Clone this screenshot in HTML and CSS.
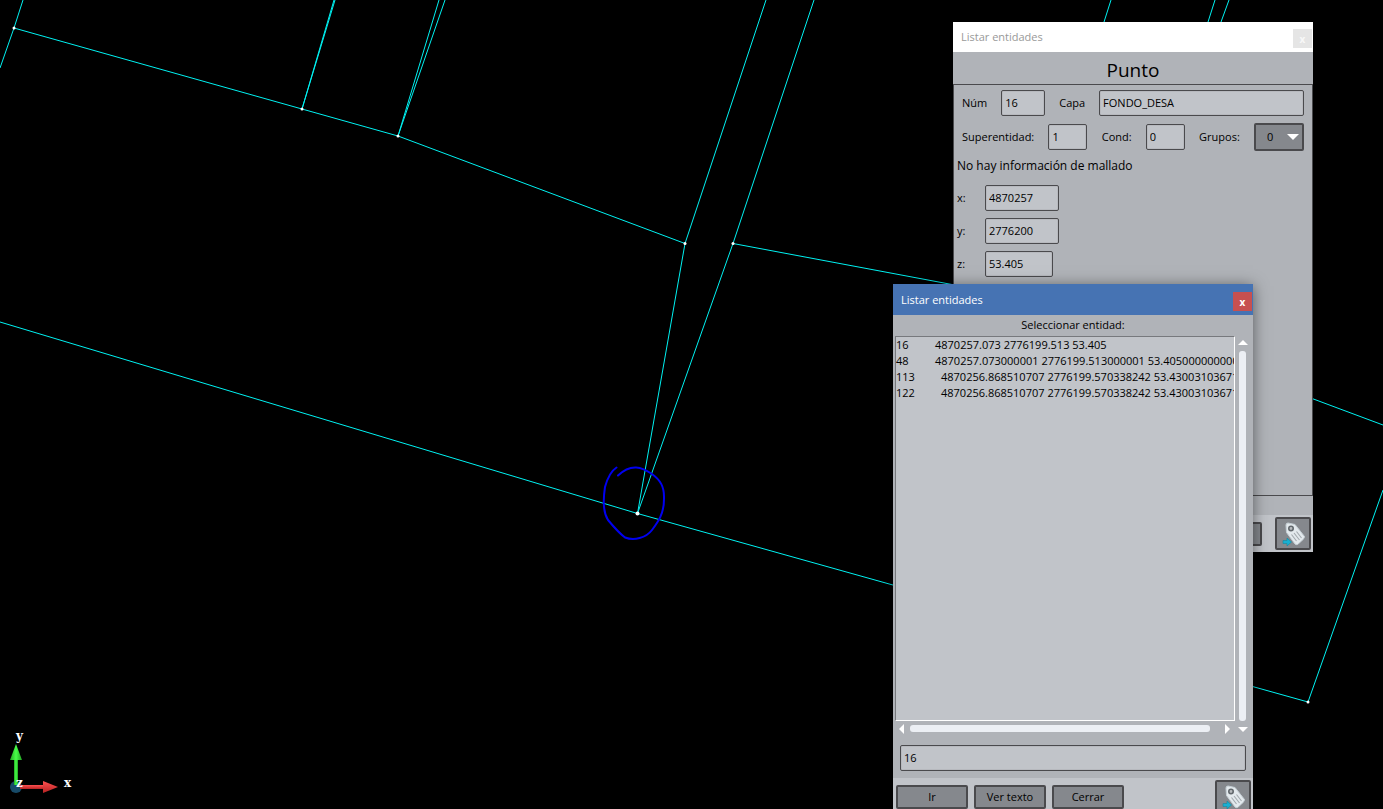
FILE: index.html
```html
<!DOCTYPE html>
<html lang="es">
<head>
<meta charset="utf-8">
<title>Listar entidades</title>
<link rel="stylesheet" href="styles.css">
</head>
<body>
<main class="desktop">
  <svg class="canvas" width="1383" height="809" viewBox="0 0 1383 809" aria-hidden="true">
    <defs>
      <linearGradient id="red" x1="0" y1="0" x2="0" y2="1"><stop offset="0" stop-color="#ff5050"/><stop offset="1" stop-color="#b52222"/></linearGradient>
      <linearGradient id="green" x1="0" y1="0" x2="1" y2="0"><stop offset="0" stop-color="#23a523"/><stop offset=".5" stop-color="#48ff48"/><stop offset="1" stop-color="#20a020"/></linearGradient>
      <symbol id="tag" viewBox="0 0 28 28">
        <path d="M9 3L16 4.500L25.500 16.500Q26 18.500 18.500 24.500Q17 25 16 24L7.500 12.500L7 5Q7 3 9 3Z" fill="#e3e9ed" stroke="#c4ced4" stroke-width="1"/>
        <circle cx="12" cy="8.500" r="2.200" fill="#b6babd" stroke="#62686d" stroke-width="1.600"/>
        <path d="M12.500 14.500L17.500 21M15 13L20.500 20M17.500 11.500L22.500 18" stroke="#a2a9ae" stroke-width="1.100"/>
        <path d="M4 20.500H8V18L12.500 22L8 26V23.500H4Z" fill="#19b0d2" stroke="#1688a0" stroke-width=".6"/>
      </symbol>
    </defs>
    <g class="wires">
      <path d="M23 0L14 28L0 68M14 28L302 109L398 136L685 243.500L637.500 513.500"/>
      <path d="M335 0L302 109M334 0L302 109"/>
      <path d="M439 0L398 136L445 0M766 0L685 243.500M814 0L733 243.500L637.500 513.500M733 243.500L960 286"/>
      <path d="M0 322L637.500 513.500L900 587M1240 683L1308 702L1383 490M1300 394L1383 425"/>
      <path d="M1111 0L1104 22M1215 0L1208 22M1229 0L1221 22"/>
    </g>
    <g class="nodes">
      <circle cx="14" cy="28" r="1.500"/><circle cx="302" cy="109" r="1.500"/><circle cx="398" cy="136" r="1.500"/>
      <circle cx="685" cy="243.500" r="1.500"/><circle cx="733" cy="243.500" r="1.500"/>
      <circle cx="637.500" cy="513.500" r="2"/><circle cx="1308" cy="702" r="1.500"/>
    </g>
    <path class="mark" d="M616.500 467.500C611 471 607.500 478 605 487C603 500 603.500 513 608 520C613 526 619 533 625 537.500C634 541 646 538 652 530C658 522 664 514 664 499C664.500 486 660 480 652 474C642 467 631 463 618 475.500"/>
    <circle cx="16" cy="787" r="6" fill="#174a68"/>
    <rect x="14" y="757" width="4" height="28" fill="url(#green)"/>
    <path d="M16 744L22 760H10Z" fill="url(#green)"/>
    <rect x="20" y="785" width="25" height="4" fill="url(#red)"/>
    <path d="M58 787L43 793V781Z" fill="url(#red)"/>
    <g class="axes"><text x="16" y="740">y</text><text x="16" y="787">z</text><text x="64" y="787">x</text></g>
  </svg>

  <section class="window window-back">
    <header class="title"><span>Listar entidades</span><button class="close" aria-label="Cerrar ventana">x</button></header>
    <h1 class="heading">Punto</h1>
    <div class="frame">
      <div class="row">
        <label for="num">Núm</label><input class="w-num" id="num" value="16">
        <label for="capa">Capa</label><input class="grow" id="capa" value="FONDO_DESA">
      </div>
      <div class="row row-even">
        <label for="sup">Superentidad:</label><input class="w-one" id="sup" value="1">
        <label for="cond">Cond:</label><input class="w-one" id="cond" value="0">
        <label for="grupos">Grupos:</label>
        <span class="combo"><select id="grupos"><option>0</option></select><i class="tri down"></i></span>
      </div>
      <p class="note">No hay información de mallado</p>
      <div class="coords">
        <label for="x">x:</label><input id="x" value="4870257">
        <label for="y">y:</label><input id="y" value="2776200">
        <label for="z">z:</label><input class="short" id="z" value="53.405">
      </div>
    </div>
    <footer class="actions actions-back"><button class="button" aria-label="Cerrar"></button><button class="button icon" aria-label="Etiqueta"><svg width="28" height="28"><use href="#tag"/></svg></button></footer>
  </section>

  <section class="window window-front">
    <header class="title"><span>Listar entidades</span><button class="close" aria-label="Cerrar ventana">x</button></header>
    <div class="caption">Seleccionar entidad:</div>
    <div class="listing">
      <ul class="list">
        <li><span class="id">16</span>4870257.073 2776199.513 53.405</li>
        <li><span class="id">48</span>4870257.073000001 2776199.513000001 53.405000000000002</li>
        <li><span class="id wide">113</span>4870256.868510707 2776199.570338242 53.43003103671076</li>
        <li><span class="id wide">122</span>4870256.868510707 2776199.570338242 53.43003103671076</li>
      </ul>
      <div class="bar vertical"><i class="tri up"></i><div class="thumb"></div><i class="tri down"></i></div>
      <div class="bar horizontal"><i class="tri left"></i><div class="thumb"></div><i class="tri right"></i></div>
    </div>
    <input class="entry" aria-label="Entidad" value="16">
    <footer class="actions"><button class="button">Ir</button><button class="button">Ver texto</button><button class="button">Cerrar</button><button class="button icon" aria-label="Etiqueta"><svg width="28" height="28"><use href="#tag"/></svg></button></footer>
  </section>
</main>
</body>
</html>
```
FILE: styles.css
```css
* { box-sizing: border-box; }
body { margin: 0; background: #000; color: #000; font: 11px/16px "Open Sans", "Noto Sans", sans-serif; }
.desktop { position: relative; height: 100vh; overflow: hidden; }
.canvas { display: block; }
.wires { fill: none; stroke: #00f2f2; stroke-width: 1; }
.nodes { fill: #fff; }
.mark { fill: none; stroke: #0000f0; stroke-width: 2; stroke-linecap: round; }
.axes { fill: #fff; font: bold 12px "DejaVu Serif", "Liberation Serif", serif; }

.window { position: absolute; width: 360px; background: #b0b3b8; }
.window-back { left: 953px; top: 22px; }
.window-front { left: 893px; top: 284px; box-shadow: 0 2px 14px rgba(0, 0, 0, .5); }
.title { display: flex; align-items: center; justify-content: space-between; height: 30px; padding: 0 1px 0 8px; background: #fff; color: #999; }
.close { align-self: flex-end; width: 19px; height: 19px; margin-bottom: 4px; padding: 0; border: 0; background: #e5e5e5; color: #f8f8f8; font: bold 10px/18px "Open Sans", sans-serif; }
.window-front .title { height: 31px; background: #4673b3; color: #fff; }
.window-front .close { background: #c75050; color: #fff; }

.heading { height: 32px; margin: 0; font-size: 19px; font-weight: 400; line-height: 36px; text-align: center; }
.frame { height: 412px; padding: 5px 8px 0; border: 1px solid #4a4a4d; }
input, select { min-width: 0; height: 26px; margin: 0; border: 1px solid #4a4a4d; border-radius: 2px; box-shadow: inset 0 0 0 1px #b7b9be; background: #c1c4c9; color: #000; padding: 0 3px 1px; font: 11px/16px "Open Sans", "Noto Sans", sans-serif; }
.row { display: flex; align-items: center; gap: 14px; margin-bottom: 7px; }
.row-even { justify-content: space-between; gap: 0; }
.w-num { width: 44px; }
.w-one { width: 39px; }
.grow { flex: 1; }
.combo { position: relative; display: flex; }
.combo select { width: 50px; height: 28px; padding-left: 11px; appearance: none; border-width: 2px; box-shadow: none; background: #85888d; }
.combo .tri { position: absolute; right: 5px; top: 11px; }
.note { margin: 0 -5px 11px; font-size: 12px; }
.coords { display: grid; grid-template-columns: 28px 74px; align-items: center; row-gap: 7px; margin-left: -5px; }
.coords .short { width: 68px; }

.actions { display: flex; align-items: center; gap: 6px; height: 37px; padding: 0 2px 0 3px; background: #c1c4c9; }
.actions-back { justify-content: flex-end; gap: 13px; margin-top: 19px; }
.button { width: 72px; height: 24px; padding: 0; border: 2px solid #4a4a4d; border-radius: 2px; background: #85888d; color: #000; font: 11px/16px "Open Sans", "Noto Sans", sans-serif; }
.icon { display: grid; place-items: center; width: 36px; height: 33px; margin-left: auto; }
.actions-back .icon { margin-left: 0; }

.caption { height: 21px; line-height: 20px; text-align: center; }
.listing { display: grid; grid-template-columns: 1fr 16px; grid-template-rows: 385px 16px; padding: 0 2px; }
.list { margin: 0; padding: 0; overflow: hidden; border: 1px solid #fff; border-top-color: #77797d; border-left-color: #77797d; background: #c1c4c9; list-style: none; white-space: nowrap; }
.id { display: inline-block; width: 39px; }
.wide { width: 45px; }
.bar { display: flex; align-items: center; }
.vertical { grid-row: 1 / 3; grid-column: 2; flex-direction: column; gap: 6px; padding: 4px 1px 5px 0; }
.horizontal { grid-row: 2; grid-column: 1; gap: 6px; padding: 0 5px 1px 4px; }
.thumb { flex: 1; border-radius: 3px; background: #eceff4; }
.vertical .thumb { width: 7px; }
.horizontal .thumb { height: 7px; margin-right: 9px; }
.tri { width: 0; height: 0; border: 5px solid transparent; }
.up { border-top: 0; border-bottom-color: #fff; }
.down { border-bottom: 0; border-top-color: #fff; }
.combo .down { border-width: 6px 6px 0; }
.left { border-left: 0; border-right-color: #fff; }
.right { border-right: 0; border-left-color: #fff; }
.entry { display: block; width: calc(100% - 14px); margin: 8px 7px 7px; }
```
